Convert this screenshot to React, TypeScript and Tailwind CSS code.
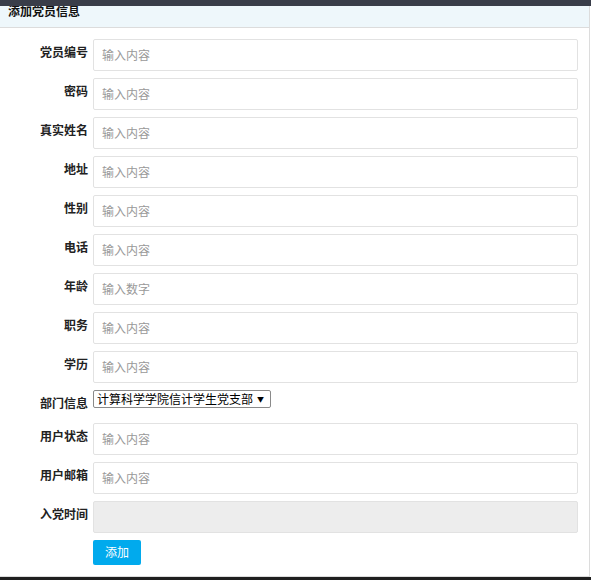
import React from 'react';

interface Field {
  label: string;
  placeholder?: string;
  kind: 'input' | 'select' | 'disabled';
}

const fields: Field[] = [
  { label: '党员编号', placeholder: '输入内容', kind: 'input' },
  { label: '密码', placeholder: '输入内容', kind: 'input' },
  { label: '真实姓名', placeholder: '输入内容', kind: 'input' },
  { label: '地址', placeholder: '输入内容', kind: 'input' },
  { label: '性别', placeholder: '输入内容', kind: 'input' },
  { label: '电话', placeholder: '输入内容', kind: 'input' },
  { label: '年龄', placeholder: '输入数字', kind: 'input' },
  { label: '职务', placeholder: '输入内容', kind: 'input' },
  { label: '学历', placeholder: '输入内容', kind: 'input' },
  { label: '部门信息', kind: 'select' },
  { label: '用户状态', placeholder: '输入内容', kind: 'input' },
  { label: '用户邮箱', placeholder: '输入内容', kind: 'input' },
  { label: '入党时间', kind: 'disabled' },
];

export default function App() {
  return (
    <div className="w-[591px] h-[580px] bg-white flex flex-col overflow-hidden font-['Microsoft_YaHei','Noto_Sans_CJK_SC',sans-serif] text-[12px] text-[#222]">
      {/* top bar */}
      <div className="h-[6px] bg-[#393d49] shrink-0" />

      {/* panel */}
      <div className="w-[590px] h-[571px] border-r border-b border-[#dcdcdc] shrink-0 flex flex-col">
        <div className="h-[22px] bg-[#eef7fb] border-b border-[#dcdcdc] overflow-hidden shrink-0">
          <h2 className="pl-[8px] -mt-[1px] font-bold text-[12px] leading-[12px] text-[#111]">添加党员信息</h2>
        </div>

        <form className="pt-[11px]" onSubmit={e => e.preventDefault()}>
          {fields.map(f => (
            <div key={f.label} className="flex items-start mb-[7px]">
              <label className="w-[88px] mr-[5px] text-right font-bold pt-[6px] pb-[7px] leading-[13px] text-[#222]">{f.label}</label>
              {f.kind === 'input' && (
                <input
                  placeholder={f.placeholder}
                  className="w-[485px] h-[32px] border border-[#e2e2e2] rounded-[2px] pl-[8px] pb-[1px] text-[12px] outline-none placeholder:text-[#999]"
                />
              )}
              {f.kind === 'disabled' && (
                <input
                  disabled
                  className="w-[485px] h-[32px] border border-[#e2e2e2] rounded-[2px] bg-[#ededed]"
                />
              )}
              {f.kind === 'select' && (
                <div className="w-[178px] h-[18px] border border-[#8a8a8a] rounded-[2px] flex items-center bg-white">
                  <select className="appearance-none flex-1 h-full pl-[3px] text-[12px] leading-[16px] text-black bg-transparent outline-none">
                    <option>计算科学学院信计学生党支部</option>
                  </select>
                  <span className="text-[7px] leading-none text-black pr-[6px]">▼</span>
                </div>
              )}
            </div>
          ))}

          <div className="flex">
            <div className="w-[93px]" />
            <button type="submit" className="w-[48px] h-[25px] bg-[#01aaed] text-white text-[12px] leading-[12px] pb-[1px] rounded-[2px]">添加</button>
          </div>
        </form>
      </div>

      {/* bottom bar */}
      <div className="h-[3px] bg-[#1f1f1f] shrink-0" />
    </div>
  );
}
